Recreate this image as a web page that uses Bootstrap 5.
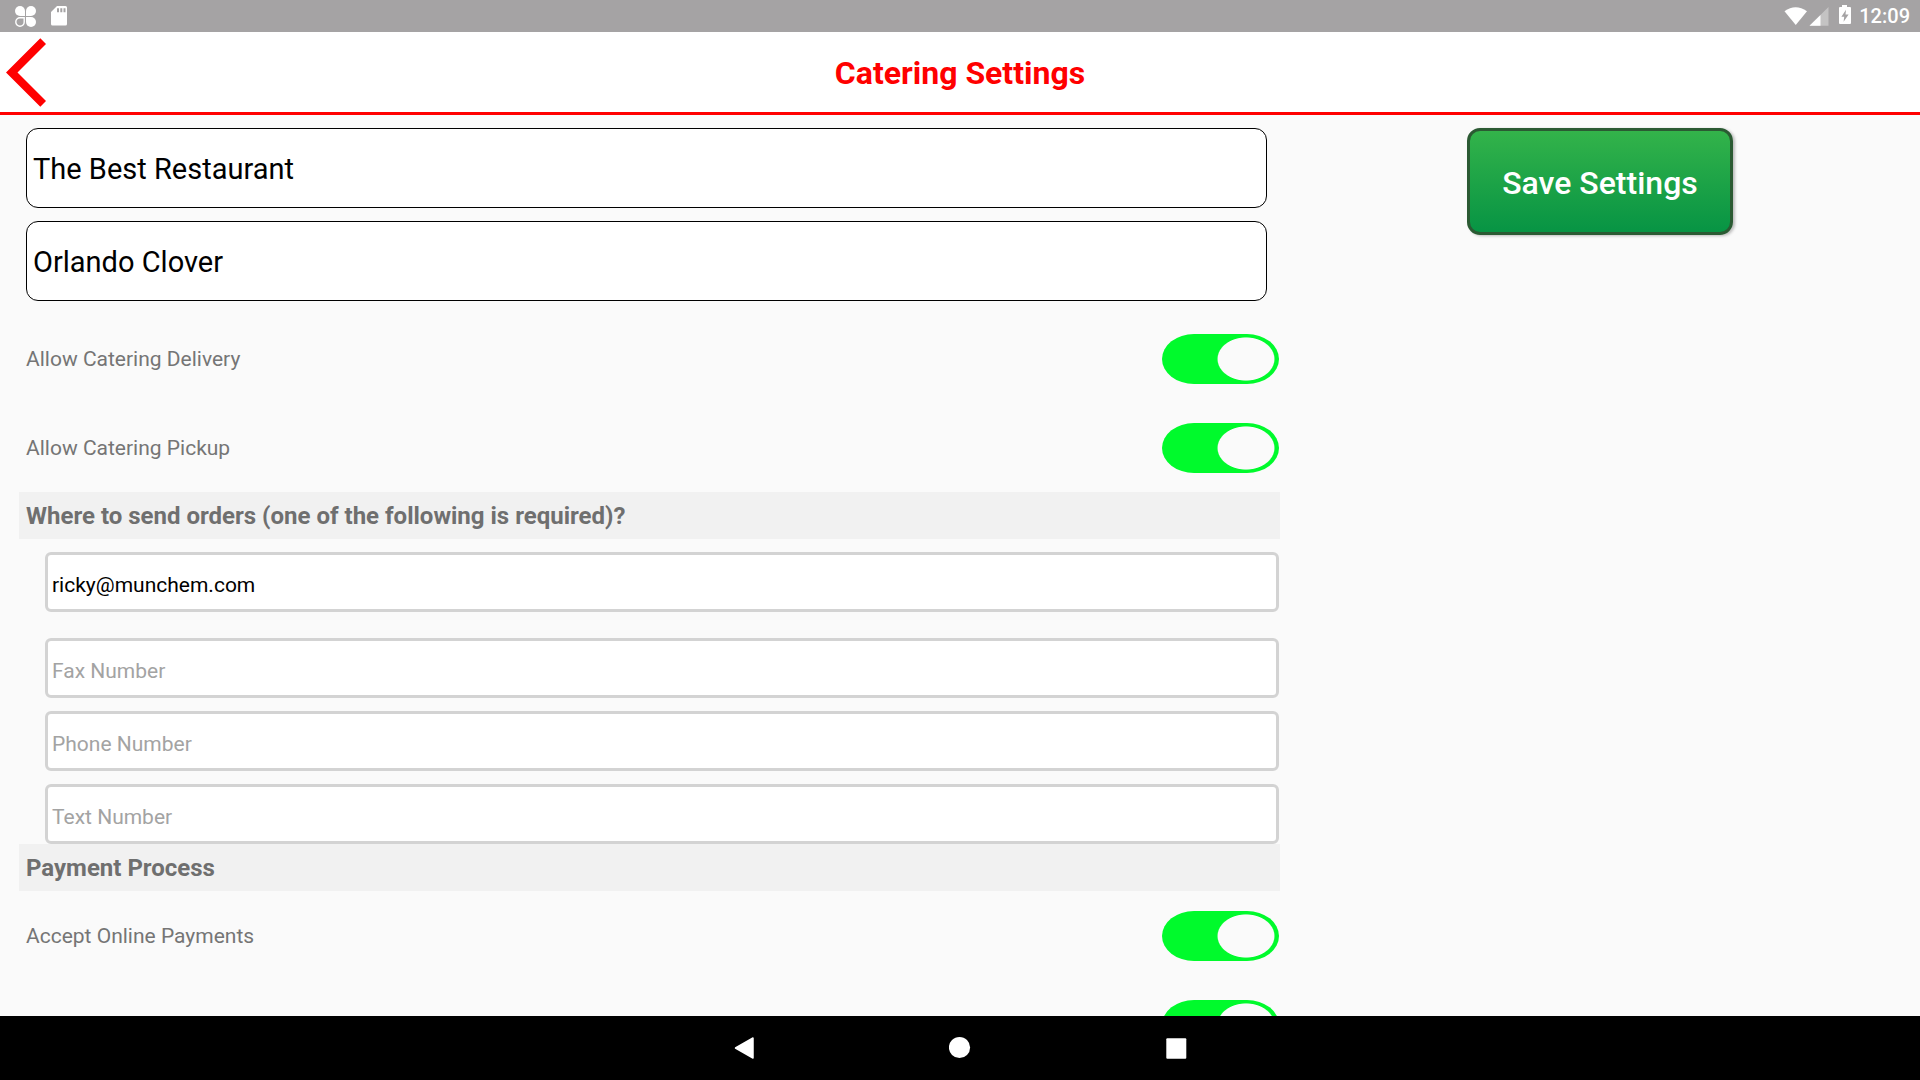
<!DOCTYPE html>
<html lang="en">
<head>
<meta charset="utf-8">
<meta name="viewport" content="width=device-width, initial-scale=1">
<title>Catering Settings</title>
<link rel="stylesheet" href="https://cdn.jsdelivr.net/npm/bootstrap@5.3.0/dist/css/bootstrap.min.css">
<style>
  body { font-family: Roboto, "Liberation Sans", sans-serif; background: #fafafa; color: #757575; font-size: 21px; line-height: 28px; }
  .status-bar { height: 32px; background: #a5a3a4; color: #fff; font-size: 20px; font-weight: 500; padding: 0 10px 0 15px; }
  .status-bar svg, .app-header svg, .system-nav svg { display: block; }
  .app-header { height: 83px; background: #fff; border-bottom: 3px solid #f00; }
  .app-title { color: #f00; font-size: 32px; font-weight: 700; line-height: 40px; padding-top: 2px; }
  .back-link { width: 46px; padding-left: 6px; }
  .content { min-height: 0; overflow-y: auto; scrollbar-width: none; }
  .content::-webkit-scrollbar { display: none; }
  .settings { padding: 13px 0 13px 19px; }
  .name-fields { padding: 0 13px 0 7px; gap: 13px; margin-bottom: 13px; }
  .name-input { height: 80px; border: 1px solid #000; border-radius: 12px; padding: 2px 6px 0; font-size: 29px; color: #000; }
  .toggle-row { height: 89px; padding: 0 1px 0 7px; }
  .form-switch .toggle { width: 117px; height: 50px; margin: 0; border: 0; border-radius: 32px / 25px; background: #fafafa; box-shadow: inset 0 0 0 4px #bbb; }
  .form-switch .toggle:checked { box-shadow: none; background: radial-gradient(29px 22px at 84px 50%, #fafafa 96%, #00fa2c 100%); }
  .section-title { height: 47px; line-height: 45px; margin: 0; padding: 2px 0 0 7px; background: #f1f1f1; color: #6f6f6f; font-size: 24px; font-weight: 700; }
  .contact-fields { padding: 13px 1px 0 26px; gap: 13px; }
  .contact-input { height: 60px; border: 3px solid #d3d3d3; border-radius: 6px; padding: 5px 4px 0; font-size: 21px; color: #000; }
  .contact-input[type="email"] { margin-bottom: 13px; }
  .contact-input::placeholder { color: #a3a3a3; }
  .save-col { padding-top: 13px; }
  .btn-save { width: 266px; height: 107px; border: 3px solid #2b5a33; border-radius: 13px; padding: 8px 12px 6px; background: linear-gradient(#33b34a, #079444); color: #fff; font-size: 32px; font-weight: 500; box-shadow: 2px 1px 3px rgba(0, 0, 0, .25); }
  .btn-save:hover { color: #fff; border-color: #2b5a33; }
  .system-nav { height: 64px; background: #000; }
  .system-nav button { width: 216px; height: 64px; border: 0; background: none; padding: 0; }
</style>
</head>
<body class="vh-100 d-flex flex-column overflow-hidden">

<div class="status-bar d-flex align-items-center flex-shrink-0">
  <svg width="60" height="32" viewBox="0 0 60 32" fill="#fff" aria-hidden="true">
    <path d="M5 6A5 5 0 0 1 10 11V16H5A5 5 0 0 1 5 6Z"/>
    <path d="M16 6A5 5 0 0 0 11 11V16H16A5 5 0 0 0 16 6Z"/>
    <path d="M16 27A5 5 0 0 1 11 22V17H16A5 5 0 0 1 16 27Z"/>
    <path d="M5 17.800H9.200V22A4.200 4.200 0 1 1 5 17.800Z" fill="none" stroke="#fff" stroke-width="1.400"/>
    <path fill-rule="evenodd" d="M42 6H50.500Q52 6 52 7.500V24Q52 25.500 50.500 25.500H37.500Q36 25.500 36 24V12ZM42 8.300V12.300H44V8.300ZM45.300 8.300V12.300H47.300V8.300ZM48.500 8.300V12.300H50.500V8.300Z"/>
  </svg>
  <svg class="ms-auto me-2" width="67" height="32" viewBox="0 0 67 32" aria-hidden="true">
    <path d="M0.500 11.200Q11.500 3.200 23 11.200L11.750 25Z" fill="#fff"/>
    <path d="M44.500 7V25.700H25.500Z" fill="#fff" opacity=".35"/>
    <path d="M36.500 15V25.700H25.500Z" fill="#fff"/>
    <path fill-rule="evenodd" d="M58 5H63V7H66Q67 7 67 8V23Q67 24 66 24H56Q55 24 55 23V8Q55 7 56 7H58ZM62 9.800L57.400 16.800H60.200L59.600 21.800L64.600 14.400H61.500Z" fill="#fff"/>
  </svg>
  <span>12:09</span>
</div>

<header class="app-header d-flex align-items-center flex-shrink-0">
  <a href="#" class="back-link" aria-label="Back">
    <svg width="40" height="70" viewBox="0 0 40 70" aria-hidden="true"><path d="M0 35.500L34.300 1.300L40 7L11.500 35.500L40 64L34.300 69.700Z" fill="#f00"/></svg>
  </a>
  <h1 class="app-title flex-fill text-center m-0">Catering Settings</h1>
  <span class="back-link"></span>
</header>

<main class="content flex-fill">
  <form class="row g-0">
    <div class="col-8 settings">
      <div class="name-fields d-flex flex-column">
        <input class="form-control name-input" type="text" value="The Best Restaurant" aria-label="Restaurant name">
        <input class="form-control name-input" type="text" value="Orlando Clover" aria-label="Location name">
      </div>

      <div class="toggle-row form-switch d-flex align-items-center justify-content-between">
        <label for="delivery">Allow Catering Delivery</label>
        <input class="form-check-input toggle" type="checkbox" role="switch" id="delivery" checked>
      </div>
      <div class="toggle-row form-switch d-flex align-items-center justify-content-between">
        <label for="pickup">Allow Catering Pickup</label>
        <input class="form-check-input toggle" type="checkbox" role="switch" id="pickup" checked>
      </div>

      <h2 class="section-title">Where to send orders (one of the following is required)?</h2>
      <div class="contact-fields d-flex flex-column">
        <input class="form-control contact-input" type="email" value="ricky@munchem.com" aria-label="Email">
        <input class="form-control contact-input" type="tel" placeholder="Fax Number" aria-label="Fax Number">
        <input class="form-control contact-input" type="tel" placeholder="Phone Number" aria-label="Phone Number">
        <input class="form-control contact-input" type="tel" placeholder="Text Number" aria-label="Text Number">
      </div>

      <h2 class="section-title">Payment Process</h2>
      <div class="toggle-row form-switch d-flex align-items-center justify-content-between">
        <label for="online">Accept Online Payments</label>
        <input class="form-check-input toggle" type="checkbox" role="switch" id="online" checked>
      </div>
      <div class="toggle-row form-switch d-flex align-items-center justify-content-end">
        <input class="form-check-input toggle" type="checkbox" role="switch" aria-label="Payment option" checked>
      </div>
    </div>

    <div class="col-4 save-col text-center">
      <button type="button" class="btn btn-save">Save Settings</button>
    </div>
  </form>
</main>

<nav class="system-nav d-flex justify-content-center flex-shrink-0" aria-label="System">
  <button type="button" class="d-flex align-items-center justify-content-center" aria-label="Back">
    <svg width="22" height="24" viewBox="0 0 22 24"><path d="M20 2V22L2.500 12Z" fill="#fff" stroke="#fff" stroke-width="1.500" stroke-linejoin="round"/></svg>
  </button>
  <button type="button" class="d-flex align-items-center justify-content-center" aria-label="Home">
    <svg width="22" height="24" viewBox="0 0 22 24"><circle cx="10.500" cy="11.500" r="10.600" fill="#fff"/></svg>
  </button>
  <button type="button" class="d-flex align-items-center justify-content-center" aria-label="Recent apps">
    <svg width="22" height="24" viewBox="0 0 22 24"><rect x="1.300" y="2.300" width="20" height="20.400" rx="1" fill="#fff"/></svg>
  </button>
</nav>

<script src="https://cdn.jsdelivr.net/npm/bootstrap@5.3.0/dist/js/bootstrap.bundle.min.js"></script>
</body>
</html>
